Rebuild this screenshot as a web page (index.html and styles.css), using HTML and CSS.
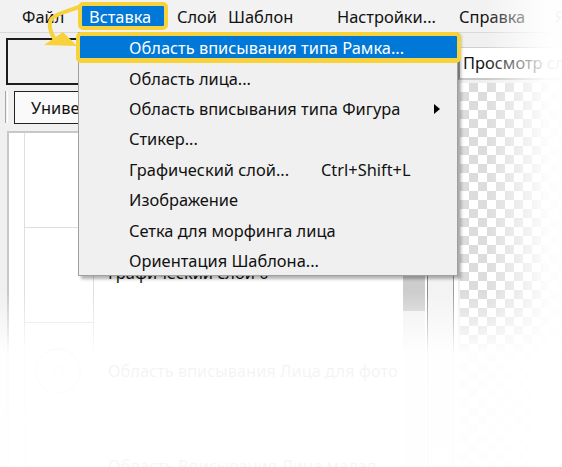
FILE: index.html
```html
<!DOCTYPE html>
<html lang="ru">
<head>
<meta charset="utf-8">
<title>Вставка</title>
<link rel="stylesheet" href="styles.css">
</head>
<body>
<div class="app">
  <nav class="menubar">
    <span class="mi mi-file">Файл</span>
    <span class="mi mi-insert">Вставка</span>
    <span class="mi mi-layer">Слой</span>
    <span class="mi mi-tpl">Шаблон</span>
    <span class="mi mi-set">Настройки...</span>
    <span class="mi mi-help">Справка</span>
    <span class="mi mi-lang">Я</span>
  </nav>
  <div class="main">
    <div class="left">
      <div class="toolbar"><div class="bigbox"></div></div>
      <div class="tabs"><span class="sep"></span><button class="tab">Универсальный</button></div>
      <div class="list">
        <div class="rows">
          <div class="row"><div class="thumb"></div><span class="label">Область вписывания типа Рамка</span></div>
          <div class="row row-2"><div class="thumb"></div><span class="label">Графический слой 0</span></div>
          <div class="row"><div class="thumb"><svg class="face" viewBox="0 0 70 95"><circle cx="33" cy="48" r="22"/><circle cx="33" cy="48" r="5"/></svg></div><span class="label">Область вписывания Лица для фото</span></div>
          <div class="row"><div class="thumb"></div><span class="label">Область Вписывания Лица малая</span></div>
        </div>
        <div class="scroll"><div class="scroll-thumb"></div></div>
        <div class="col"></div>
      </div>
    </div>
    <div class="right">
      <div class="preview-head">Просмотр слоя</div>
      <div class="checker"></div>
    </div>
  </div>
</div>

<div class="dropdown">
  <div class="item item-active"><span class="item-label">Область вписывания типа Рамка...</span></div>
  <div class="item"><span class="item-label">Область лица...</span></div>
  <div class="item"><span class="item-label">Область вписывания типа Фигура</span><span class="sub-arrow"></span></div>
  <div class="item"><span class="item-label">Стикер...</span></div>
  <div class="item"><span class="item-label item-label-fixed">Графический слой...</span><span class="shortcut">Ctrl+Shift+L</span></div>
  <div class="item"><span class="item-label">Изображение</span></div>
  <div class="item"><span class="item-label">Сетка для морфинга лица</span></div>
  <div class="item"><span class="item-label">Ориентация Шаблона...</span></div>
</div>

<svg class="pointer" viewBox="0 0 90 60" width="90" height="60">
  <path d="M79 7 C 64 12, 52 15, 50 22 C 49 28, 51 33, 54 38" />
  <polygon points="44,45 63,32 77,46" />
</svg>

<div class="fade-right"></div>
<div class="fade-bottom"></div>
</body>
</html>
```
FILE: styles.css
```css
* { box-sizing: border-box; }
html, body { margin: 0; padding: 0; }
body {
  width: 562px;
  height: 467px;
  overflow: hidden;
  position: relative;
  background: #f0f0f0;
  font-family: "Noto Sans", "Open Sans", sans-serif;
  font-size: 16.4px;
  color: #111;
}
.app { display: flex; flex-direction: column; height: 467px; }

/* menubar */
.menubar {
  height: 33px;
  flex: none;
  display: flex;
  align-items: center;
  padding-left: 22px;
  background: #f2f2f2;
  border-bottom: 1px solid #d9d9d9;
  white-space: nowrap;
}
.mi { display: block; flex: none; }
.mi-file { width: 56px; }
.mi-insert {
  width: 90px;
  height: 28px;
  border: 4px solid #f8d23a;
  border-radius: 5px;
  background: #0078d7;
  color: #fff;
  padding-left: 7px;
  display: flex;
  align-items: center;
}
.mi-layer { margin-left: 9px; width: 51px; }
.mi-tpl { width: 109px; }
.mi-set { width: 122px; }
.mi-help { width: 96px; }

/* main area */
.main { flex: 1; display: flex; min-height: 0; }
.left { width: 458px; flex: none; display: flex; flex-direction: column; overflow: hidden; }
.toolbar { height: 55px; flex: none; padding: 5px 0 0 6px; }
.bigbox { width: 480px; height: 47px; border: 2px solid #1c1c1c; background: #f0f0f0; }
.tabs { height: 43px; flex: none; display: flex; align-items: flex-start; padding-top: 3px; }
.sep { width: 3px; height: 32px; margin-left: 5px; border-left: 1px solid #a8a8a8; border-right: 1px solid #fff; }
.tab {
  margin-left: 6px;
  width: 200px;
  height: 33px;
  border: 1px solid #222;
  background: #fafafa;
  font: inherit;
  color: #111;
  text-align: left;
  padding: 0 0 0 16px;
}
.list {
  flex: 1;
  margin-left: 7px;
  display: flex;
  background: #fff;
  border-left: 2px solid #c8c8c8;
  border-top: 2px solid #c8c8c8;
}
.rows { width: 394px; flex: none; padding-left: 15px; overflow: hidden; }
.row { height: 95px; display: flex; align-items: center; white-space: nowrap; }
.row-2 .label { margin-bottom: 6px; }
.thumb {
  width: 70px;
  align-self: stretch;
  flex: none;
  border-left: 1px solid #dedede;
  border-right: 1px solid #dedede;
  border-bottom: 1px solid #dedede;
}
.face { width: 70px; height: 95px; fill: none; stroke: #cfcfcf; stroke-width: 1.5; }
.label { margin-left: 14px; }
.scroll { width: 22px; flex: none; background: #f0f0f0; }
.scroll-thumb { margin-top: 100px; height: 78px; background: #cdcdcd; }
.col {
  width: 27px;
  flex: none;
  margin-left: 2px;
  border-left: 1px solid #8c8c8c;
  border-right: 1px solid #9a9a9a;
  background: #f3f3f3;
}

.right { flex: 1; display: flex; flex-direction: column; min-width: 0; }
.preview-head {
  margin-top: 14px;
  height: 33px;
  flex: none;
  background: #fff;
  border-top: 1px solid #cfcfcf;
  border-left: 2px solid #a5a5a5;
  border-bottom: 2px solid #c8c8c8;
  padding: 3px 0 0 3px;
  white-space: nowrap;
  overflow: hidden;
}
.checker {
  flex: 1;
  margin: 3px 0 0 2px;
  background-color: #fff;
  background-image:
    linear-gradient(45deg, #dcdcdc 25%, transparent 25%, transparent 75%, #dcdcdc 75%),
    linear-gradient(45deg, #dcdcdc 25%, transparent 25%, transparent 75%, #dcdcdc 75%);
  background-size: 18px 18px;
  background-position: 0 0, 9px 9px;
}

/* dropdown */
.dropdown {
  position: absolute;
  left: 78px;
  top: 32px;
  width: 380px;
  height: 244px;
  background: #f0f0f0;
  border: 1px solid #a0a0a0;
  box-shadow: 3px 3px 3px rgba(0, 0, 0, 0.3);
}
.item {
  height: 30.4px;
  display: flex;
  align-items: center;
  padding-left: 50px;
  white-space: nowrap;
}
.item-active {
  height: 31px;
  margin: -1px -4px 0 -3px;
  border: 4px solid #f8d23a;
  border-bottom-width: 5px;
  border-radius: 5px;
  background: #0078d7;
  color: #fff;
  padding-left: 49px;
}
.item-label-fixed { width: 192px; }
.sub-arrow {
  margin-left: auto;
  margin-right: 17px;
  width: 0;
  height: 0;
  border-left: 6px solid #000;
  border-top: 5px solid transparent;
  border-bottom: 5px solid transparent;
}

.pointer {
  position: absolute;
  left: 0;
  top: 0;
  pointer-events: none;
}
.pointer path { fill: none; stroke: #f8d23a; stroke-width: 4; stroke-linecap: round; }
.pointer polygon { fill: #f8d23a; }

/* fades */
.fade-right {
  position: absolute;
  top: 0;
  bottom: 0;
  left: 485px;
  right: 0;
  background: linear-gradient(to right, rgba(255,255,255,0), rgba(255,255,255,0.93) 62px, rgba(255,255,255,0.96));
}
.fade-bottom {
  position: absolute;
  left: 0;
  right: 0;
  top: 292px;
  bottom: 0;
  background: linear-gradient(to bottom, rgba(255,255,255,0), rgba(255,255,255,0.95) 60px, rgba(255,255,255,0.96));
}
```
